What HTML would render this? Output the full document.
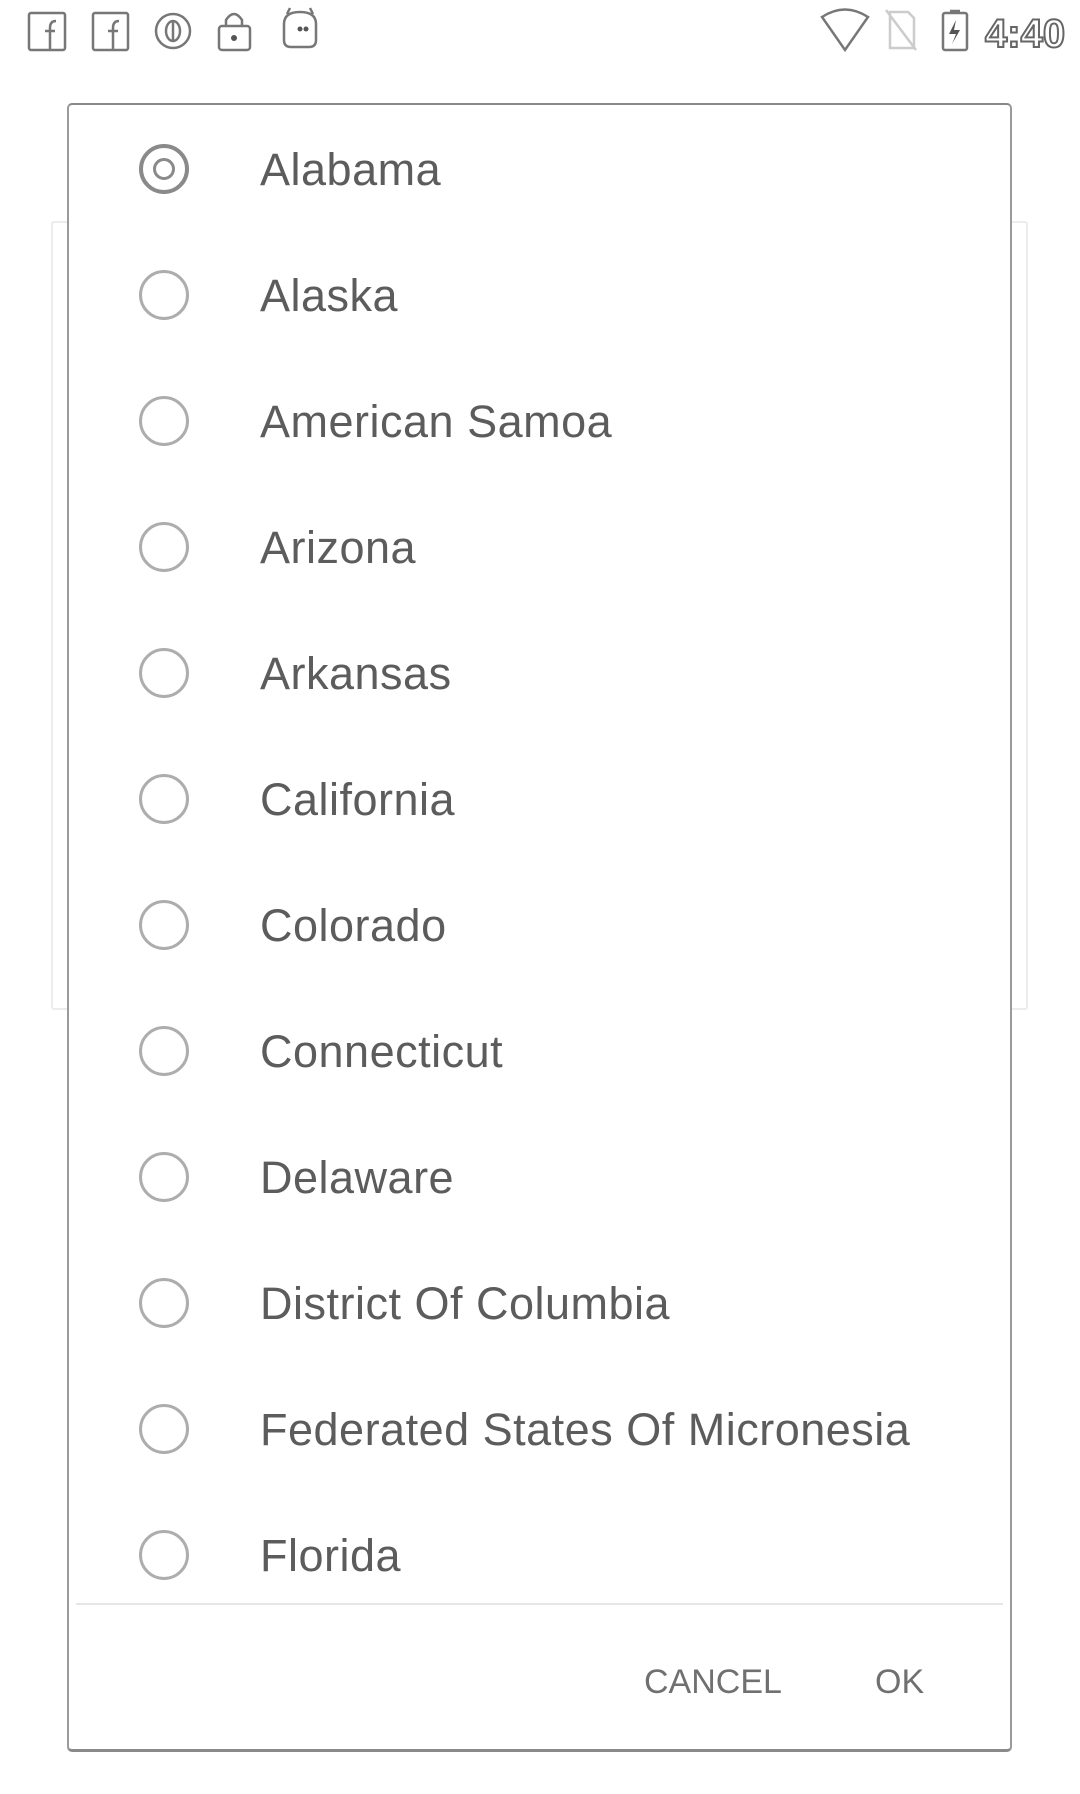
<!DOCTYPE html>
<html><head><meta charset="utf-8"><style>
*{margin:0;padding:0;box-sizing:border-box}
body{width:1080px;height:1794px;background:#fff;position:relative;overflow:hidden;font-family:"Liberation Sans",Roboto,sans-serif}
.bgcard{position:absolute;left:51px;top:221px;width:977px;height:789px;border:2px solid #ececec;border-radius:3px}
.dlg{position:absolute;left:67px;top:103px;width:945px;height:1649px;background:#fff;border:2px solid #9a9a9a;border-top-color:#888;border-bottom:3px solid #8a8a8a;border-radius:5px}
.row{position:absolute;left:0;width:100%;height:126px}
.radio{position:absolute;left:70px;width:50px;height:50px;border:3px solid #adadad;border-radius:50%}
.radio.sel{border:4px solid #8a8a8a}
.radio.sel::after{content:"";position:absolute;left:10px;top:10px;width:22px;height:22px;border:3px solid #8a8a8a;border-radius:50%;box-sizing:border-box}
.lbl{position:absolute;left:191px;font-size:45px;color:#5c5c5c;line-height:1;letter-spacing:0.5px}
.div{position:absolute;left:7px;right:7px;top:1498px;height:2px;background:#e6e6e6}
.btn{position:absolute;top:1560px;font-size:34px;color:#707070;line-height:1}
.sb{position:absolute}
</style></head><body>
<div class="bgcard"></div>
<svg class="sb" style="left:0;top:0" width="1080" height="60">
<g fill="none" stroke="#777" stroke-width="2.5">
<rect x="29" y="13" width="36" height="37" rx="2"/>
<path d="M50 49 V28 Q50 21 56 21 M45 31 H55"/>
<rect x="93" y="13" width="35" height="37" rx="2"/>
<path d="M113 49 V28 Q113 21 119 21 M108 31 H118"/>
<circle cx="173" cy="31" r="17"/>
<ellipse cx="173" cy="31" rx="7" ry="10"/>
<path d="M173 21 V41"/>
<rect x="219" y="26" width="31" height="24" rx="3"/>
<path d="M226 26 V20 Q234 8 242 20 V26"/>
<path d="M287 14 L290 8 M313 14 L310 8"/>
<path d="M284 24 Q284 12 300 12 Q316 12 316 24 V40 Q316 47 309 47 H291 Q284 47 284 40 Z"/>
<path d="M822 17 Q845 2 868 17 L845 50 Z"/>
<path d="M890 12 H908 L914 18 V48 H890 Z M886 10 L916 50" stroke="#ccc"/>
<rect x="943" y="13" width="24" height="37" rx="2"/><path d="M950 11 H960"/>
</g>
<circle cx="300" cy="29" r="2.5" fill="#555"/><circle cx="306" cy="29" r="2.5" fill="#555"/>
<circle cx="234" cy="38" r="3" fill="#555"/>
<path d="M956 20 L949 34 H956 L952 44 L960 30 H954 Z" fill="#555"/>
<text x="985" y="47" font-family="Liberation Sans" font-weight="bold" font-size="40" fill="#fff" stroke="#666" stroke-width="2">4:40</text>
</svg>
<div class="dlg">
<div class="row" style="top:3px"><div class="radio sel" style="top:36px"></div><div class="lbl" style="top:39px">Alabama</div></div>
<div class="row" style="top:129px"><div class="radio" style="top:36px"></div><div class="lbl" style="top:39px">Alaska</div></div>
<div class="row" style="top:255px"><div class="radio" style="top:36px"></div><div class="lbl" style="top:39px">American Samoa</div></div>
<div class="row" style="top:381px"><div class="radio" style="top:36px"></div><div class="lbl" style="top:39px">Arizona</div></div>
<div class="row" style="top:507px"><div class="radio" style="top:36px"></div><div class="lbl" style="top:39px">Arkansas</div></div>
<div class="row" style="top:633px"><div class="radio" style="top:36px"></div><div class="lbl" style="top:39px">California</div></div>
<div class="row" style="top:759px"><div class="radio" style="top:36px"></div><div class="lbl" style="top:39px">Colorado</div></div>
<div class="row" style="top:885px"><div class="radio" style="top:36px"></div><div class="lbl" style="top:39px">Connecticut</div></div>
<div class="row" style="top:1011px"><div class="radio" style="top:36px"></div><div class="lbl" style="top:39px">Delaware</div></div>
<div class="row" style="top:1137px"><div class="radio" style="top:36px"></div><div class="lbl" style="top:39px">District Of Columbia</div></div>
<div class="row" style="top:1263px"><div class="radio" style="top:36px"></div><div class="lbl" style="top:39px">Federated States Of Micronesia</div></div>
<div class="row" style="top:1389px"><div class="radio" style="top:36px"></div><div class="lbl" style="top:39px">Florida</div></div>
<div class="div"></div>
<div class="btn" style="left:575px">CANCEL</div>
<div class="btn" style="left:806px">OK</div>
</div>
</body></html>
